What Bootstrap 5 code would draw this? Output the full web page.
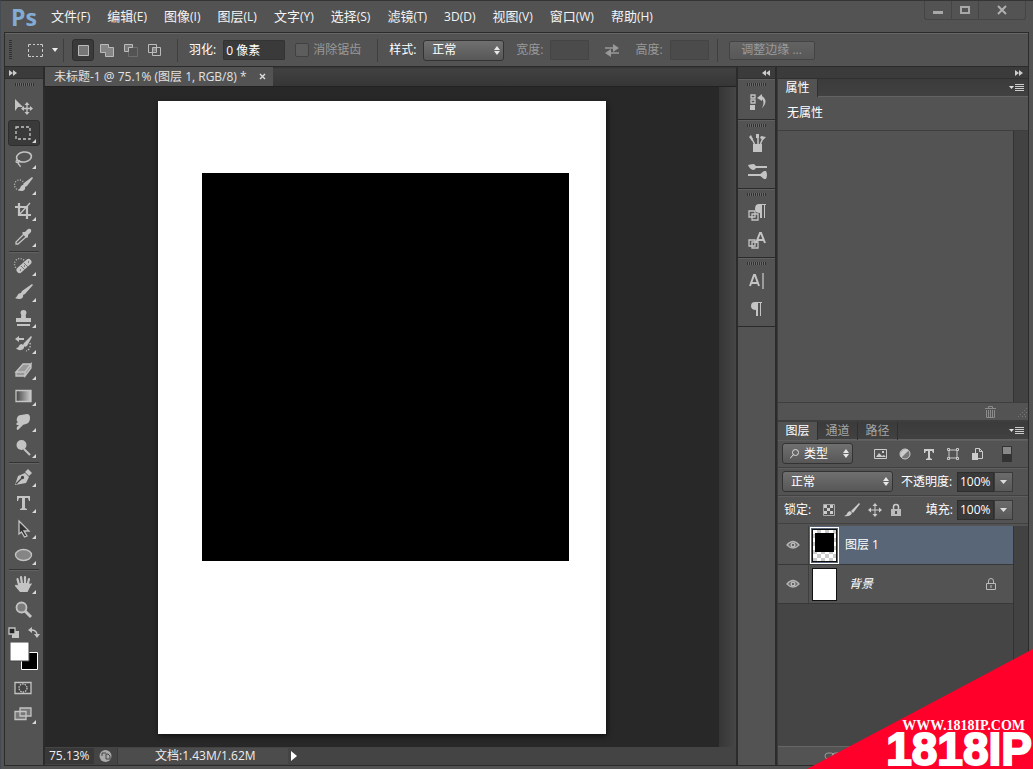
<!DOCTYPE html>
<html lang="zh-CN">
<head>
<meta charset="utf-8">
<meta name="viewport" content="width=device-width, initial-scale=1">
<title>未标题-1 @ 75.1%</title>
<link href="https://cdn.jsdelivr.net/npm/bootstrap@5.3.0/dist/css/bootstrap.min.css" rel="stylesheet">
<style>
:root{--face:#535353;--line:#2b2b2b;--hi:#666;--ico:#c4c4c4}
body{background:var(--face);color:#fff;font:12px/16px "Open Sans","Noto Sans CJK SC",sans-serif;border-top:1px solid #353535;border-left:1px solid #454b53;overflow:hidden}
button{background:none;border:0;padding:0;color:inherit;line-height:inherit}
svg{display:block;flex:none}
.ico{fill:none;stroke:var(--ico);stroke-width:1.3}
.ico .f{fill:var(--ico);stroke:none}
.menus{height:31px;padding-left:10px}
.logo-ps{color:#84abd3;font:bold 23px/28px "Open Sans",sans-serif;width:40px}
.menus a{color:#f4f4f4;text-decoration:none;font-size:13px;white-space:nowrap}
.menus a span{font-size:12px}
.menus .list-unstyled{gap:17px}
.win{margin-right:7px;border:1px solid #454545;border-top:0;height:19px;border-radius:0 0 3px 3px}
.win button{width:27px;border-right:1px solid #454545;display:grid;place-items:center}
.win button:last-child{width:46px;border:0}
.frame{margin:0 4px 3px 3px;border:1px solid var(--line)}
.opts{height:34px;border-top:1px solid var(--hi);border-bottom:1px solid var(--line);white-space:nowrap}
.dim{color:#9a9a9a}
.grip-v{width:3px;height:20px;background:repeating-linear-gradient(#303030 0 1px,#535353 1px 2px)}
.grip-h{width:19px;height:3px;background:repeating-linear-gradient(90deg,#303030 0 1px,#6a6a6a 1px 2px)}
.vsep{width:1px;height:23px;background:#3e3e3e;margin:0 11px}
.modes{gap:2px}
.mode{width:22px;height:22px;display:grid;place-items:center;border:1px solid transparent;border-radius:2px}
.mode.on,.tool.on{background:#3a3a3a;border:1px solid #2e2e2e;border-radius:3px}
.opts .field{background:#3a3a3a;border:1px solid #333;color:#fff;height:20px;padding:0 2px;font-size:12px;border-radius:1px}
.opts .field:disabled{background:#4b4b4b;border-color:#444}
.opts .lab{margin-right:7px}
.tick{appearance:none;width:14px;height:14px;margin:0 4px 0 10px;background:#5d5d5d;border:1px solid #414141;border-radius:2px}
.pick{appearance:none;height:21px;border:1px solid #333;border-radius:3px;color:#fff;padding:0 8px;font-size:12px;line-height:16px;background:url("data:image/svg+xml,%3Csvg xmlns='http://www.w3.org/2000/svg' width='6' height='9'%3E%3Cpath d='M0 4L3 0L6 4M0 5L3 9L6 5' fill='%23e8e8e8'/%3E%3C/svg%3E") no-repeat right 3px center,linear-gradient(#707070,#575757)}
.soft{height:19px;border:1px solid #434343;border-radius:2px;background:linear-gradient(#626262,#585858)}
.cap-bar{height:12px;background:#3b3b3b;border-bottom:1px solid #303030}
.tools{width:39px;border-right:1px solid var(--line)}
.tool{height:26px;width:32px;position:relative;display:grid;place-items:center;border:1px solid transparent;padding-right:2px}
.tool.sub::after{content:"";position:absolute;right:3px;bottom:2px;border:2px solid;border-color:transparent #d8d8d8 #d8d8d8 transparent}
.tsep{width:30px;height:1px;margin:1px 0;background:#343434;box-shadow:0 1px #626262}
.doc{border-left:1px solid var(--line);border-right:2px solid var(--line)}
.tabs-doc{height:20px;background:linear-gradient(#333,#414141 2px,#363636);border-bottom:1px solid #222}
.tabs-doc .cur{background:var(--face);color:#e2e2e2;padding:0 7px 0 9px;height:19px}
.tabs-doc .cur button{margin-left:12px}
.stage{background:#282828}
.paper{width:448px;height:633px;background:#fff;padding:72px 37px 0 44px;box-shadow:1px 2px 5px #111}
.paper div{height:388px;background:#000}
.scroller{width:17px;background:linear-gradient(90deg,#363636,#464646)}
.status{height:18px;background:#444;color:#eee;font-size:12px}
.status .z{width:49px;padding-left:4px;background:#383838}
.status .info{width:171px;background:#4c4c4c;border-left:1px solid #3a3a3a;padding-left:37px}
.strip{width:39px;border-right:2px solid var(--line)}
.strip section{border-bottom:1px solid var(--line);border-top:1px solid #606060;padding:3px 0}
.strip .grip-h{margin:0 auto 2px}
.strip button{height:28px;width:37px;display:grid;place-items:center}
.dock{width:251px;border-left:1px solid #3c3c3c}
.tabbar{height:18px;background:linear-gradient(#3b3b3b,#414141);border-bottom:1px solid #636363}
.tabbar button{width:40px;height:18px;font-size:12px;border-right:1px solid #303030;color:#a5a5a5}
.tabbar .on{background:var(--face);color:#fff}
.track{width:15px;background:#424242;border-left:1px solid #333}
.row-c{border-bottom:1px solid #414141;height:28px;box-shadow:inset 0 1px #5e5e5e}
.kinds{gap:10px;margin-left:21px}
.num{width:37px;height:20px;background:#393939;border:1px solid #2e2e2e;color:#fff;padding:0 2px;font-size:12px}
.drop{width:19px;height:20px;border:1px solid #3a3a3a;background:linear-gradient(#6b6b6b,#595959);display:grid;place-items:center}
.layers{height:222px;border-top:2px solid var(--face)}
.layer{height:39px;background:var(--face);border-bottom:1px solid #383838}
.layer.sel .name-c{background:#586678}
.layer .eye{width:31px;align-self:stretch;display:grid;place-items:center;border-right:1px solid #3f3f3f}
.thumb{width:25px;height:33px;border:1px solid #111;background:#fff}
.thumb.chk{background:repeating-conic-gradient(#ccc 0 25%,#fff 0 50%) 0 0/8px 8px;padding:3px 2px;outline:1px solid #fff;outline-offset:1px}
.thumb.chk div{height:19px;background:#000}
.empty{background:#454545}
.brand-mark{position:absolute;right:0;bottom:0;width:226px;height:120px;background:#ff002b;clip-path:polygon(100% 0,100% 100%,0 100%);text-align:right}
.brand-mark p{margin:0;white-space:nowrap}
.brand-mark .u{font:bold 14px/16px "Liberation Serif",serif;padding:69px 8px 0 0}
.brand-mark .n{font:bold 46px/30px "Liberation Sans",sans-serif;padding-right:1px;-webkit-text-stroke:2px #fff;stroke-linejoin:round}
</style>
<script src="https://cdn.jsdelivr.net/npm/bootstrap@5.3.0/dist/js/bootstrap.bundle.min.js"></script>
</head>
<body class="vh-100 d-flex flex-column position-relative">
<header class="menus d-flex align-items-center flex-shrink-0">
  <div class="logo-ps">Ps</div>
  <nav class="flex-grow-1"><ul class="list-unstyled d-flex m-0">
    <li><a href="#">文件<span>(F)</span></a></li><li><a href="#">编辑<span>(E)</span></a></li><li><a href="#">图像<span>(I)</span></a></li><li><a href="#">图层<span>(L)</span></a></li><li><a href="#">文字<span>(Y)</span></a></li><li><a href="#">选择<span>(S)</span></a></li><li><a href="#">滤镜<span>(T)</span></a></li><li><a href="#"><span>3D(D)</span></a></li><li><a href="#">视图<span>(V)</span></a></li><li><a href="#">窗口<span>(W)</span></a></li><li><a href="#">帮助<span>(H)</span></a></li>
  </ul></nav>
  <div class="win d-flex align-self-start">
    <button aria-label="最小化"><svg width="10" height="10"><path d="M0 6h10v3H0z" fill="#a8a8a8"/></svg></button>
    <button aria-label="最大化"><svg width="10" height="8"><path d="M1 1h8v6H1z" fill="none" stroke="#a8a8a8" stroke-width="2"/></svg></button>
    <button aria-label="关闭"><svg width="10" height="10"><path d="M1 1l8 8M9 1L1 9" stroke="#b0b0b0" stroke-width="2"/></svg></button>
  </div>
</header>
<div class="frame flex-grow-1 d-flex flex-column overflow-hidden">
<div class="opts d-flex align-items-center flex-shrink-0">
  <div class="grip-v ms-1"></div>
  <svg class="ms-3" width="15" height="13"><path d="M.5 3V.5H3M5 .5h2M9 .5h2M12 .5h2.500V3M14.500 5v3M14.500 10v2.500H12M10 12.500H8M6 12.500H4M3 12.500H.5V10M.5 8V5" fill="none" stroke="#ccc"/></svg>
  <svg class="ms-2" width="8" height="4"><path d="M1 0h6L4 4z" fill="#eee"/></svg>
  <div class="vsep ms-1 me-2"></div>
  <div class="modes d-flex">
  <button class="mode on" aria-label="新选区"><svg width="11" height="11"><path d="M.5.5h10v10H.5z" fill="#777" stroke="#bbb"/></svg></button>
  <button class="mode" aria-label="添加"><svg width="14" height="13"><path d="M.5.5h8v3h5v9h-8v-4h-5z" fill="#858585" stroke="#bbb"/></svg></button>
  <button class="mode" aria-label="减去"><svg width="14" height="13"><path d="M4.500 3.500h9v9h-9z" fill="none" stroke="#6e6e6e"/><path d="M.5.500h8v3h-4v4h-4z" fill="#777" stroke="#bbb"/></svg></button>
  <button class="mode" aria-label="交叉"><svg width="14" height="13"><path d="M4.500 3.500h4v4h-4z" fill="#888"/><path d="M.5.500h8v8h-8zM4.500 3.500h8v8h-8z" fill="none" stroke="#bbb"/></svg></button>
  </div>
  <div class="vsep"></div>
  <label for="feather" class="lab">羽化:</label><input id="feather" class="field" style="width:62px" value="0 像素">
  <input type="checkbox" class="tick" id="aa" disabled><label for="aa" class="dim">消除锯齿</label>
  <div class="vsep ms-3"></div>
  <label for="style" class="lab">样式:</label><select id="style" class="pick" style="width:81px"><option>正常</option></select>
  <label for="w" class="lab dim ms-2 ps-1">宽度:</label><input id="w" class="field" style="width:39px" disabled>
  <button class="ms-3 me-3" aria-label="互换"><svg width="14" height="13"><path d="M0 4h8M5 9h9" stroke="#999" stroke-width="1.500"/><path d="M8 0l6 4-6 4zM6 5L0 9l6 4z" fill="#999"/></svg></button>
  <label for="h" class="lab dim">高度:</label><input id="h" class="field" style="width:39px" disabled>
  <div class="vsep ms-2"></div>
  <button class="soft dim" style="width:86px">调整边缘 ...</button>
</div>
<div class="d-flex flex-grow-1 overflow-hidden">
  <aside class="tools flex-shrink-0">
    <div class="cap-bar"><svg class="ms-1" width="9" height="10"><path d="M0 3l4 3-4 3zM4 3l4 3-4 3z" fill="#ccc"/></svg></div>
    <div class="d-flex flex-column align-items-center">
      <div class="grip-h mt-1 mb-2"></div>
      <button class="tool" aria-label="移动"><svg class="ico" width="20" height="20"><path class="f" d="M2 2v12l3-4 5 0z"/><path d="M14 7v9M9.500 11.500h9"/><path class="f" d="M14 5l2.500 3h-5zM14 18l2.500-3h-5zM8 11.500l3-2.500v5zM20 11.500l-3-2.500v5z"/></svg></button>
      <button class="tool sub on" aria-label="选框"><svg class="ico" width="20" height="20"><path stroke-dasharray="3 2" d="M3 4h14v12H3z"/></svg></button>
      <button class="tool sub" aria-label="套索"><svg class="ico" width="20" height="20"><ellipse cx="11" cy="8" rx="7.500" ry="5" transform="rotate(-8 11 8)" stroke-width="1.600"/><path d="M5 11c-4 1-1 4 1 2s-2-2-1 1 3 2 2 4"/></svg></button>
      <button class="tool sub" aria-label="快速选择"><svg class="ico" width="20" height="20"><circle cx="6.500" cy="10" r="5" stroke-dasharray="1 1.600"/><path class="f" d="M20 3l-1-1-8 6-1 2 2 2 2-1zM10 10c-3 0-2 4-5 5 3 2 8 1 7-3z"/></svg></button>
      <button class="tool sub" aria-label="裁剪"><svg class="ico" width="20" height="20"><path stroke-width="2.200" d="M6 2v12h12M2 6h12v12"/><path d="M6 14L17 2"/></svg></button>
      <button class="tool sub" aria-label="吸管"><svg class="ico" width="20" height="20"><path d="M11 7l2 3-8 7-2 0 0-2z"/><path class="f" d="M10 5l2 0 3-3q4-1 3 3l-3 3v2l-1 1-5-5z"/></svg></button>
      <div class="tsep"></div>
      <button class="tool sub" aria-label="修复画笔"><svg class="ico" width="20" height="20"><circle cx="7" cy="8" r="5.500" stroke-dasharray="1 1.600"/><rect class="f" x="2" y="7" width="18" height="6" rx="3" transform="rotate(-42 11 10)"/><path d="M8 10l4 4M11 7l4 4" stroke="#777" stroke-width="1"/><path d="M11 10h1M7 14h1M15 6h1" stroke="#666"/></svg></button>
      <button class="tool sub" aria-label="画笔"><svg class="ico" width="20" height="20"><path class="f" d="M19 2l1 1-8 9-2 1-2-2 1-2zM8 11c-4 0-3 4-6 5 4 2 9 1 8-3z"/></svg></button>
      <button class="tool sub" aria-label="图章"><svg class="ico" width="20" height="20"><path class="f" d="M8 10q1-3-.5-5 0-3 3-3t3 3q-1.500 2-.5 5h5v4H3v-4zM4 16h13v2H4z"/></svg></button>
      <button class="tool sub" aria-label="历史画笔"><svg class="ico" width="20" height="20"><path class="f" d="M19 3l-1-1-7 7-1 2 2 2 2-1zM9 10c-4 0-2 4-6 4 3 4 9 2 8-2zM2 5l4-3v2h5v2H6v2z"/><path d="M17 9c1 4-1 7-4 8" stroke-dasharray="1.500 1.500"/></svg></button>
      <button class="tool sub" aria-label="橡皮擦"><svg class="ico" width="20" height="20"><path fill="#999" d="M3 12l7-8h8l-6 8zM3 12h9v4H3zM12 16l6-8V4l-6 8z"/></svg></button>
      <button class="tool sub" aria-label="渐变"><svg class="ico" width="20" height="20"><defs><linearGradient id="g"><stop stop-color="#444"/><stop offset="1" stop-color="#ccc"/></linearGradient></defs><path fill="url(#g)" d="M3 4.500h15v11H3z"/></svg></button>
      <button class="tool sub" aria-label="涂抹"><svg class="ico" width="20" height="20"><path class="f" d="M4 6q1-3 4-3l6-1q3 0 3 4 0 5-4 6-3 0-5 3l-3 3q-2 0-1-3l2-2H4q-2-1 1-3Q3 9 4 6z"/></svg></button>
      <button class="tool sub" aria-label="减淡"><svg class="ico" width="20" height="20"><circle class="f" cx="8.500" cy="7" r="5"/><path stroke-width="2" d="M11 11l6 6"/></svg></button>
      <div class="tsep"></div>
      <button class="tool sub" aria-label="钢笔"><svg class="ico" width="20" height="20"><path class="f" d="M2 18l3-9 7-3 4 4-3 6z"/><path class="f" d="M12 5l3-3 4 4-3 3z"/><path stroke="#444" d="M3 17l6-6"/><circle cx="9.500" cy="10.500" r="1" fill="#444" stroke="#444"/></svg></button>
      <button class="tool sub" aria-label="文字"><svg class="ico" width="20" height="20"><path class="f" d="M4 3h13v5h-1l-1-3h-3v10l2 1v1H7v-1l2-1V5H6L5 8H4z"/></svg></button>
      <button class="tool sub" aria-label="路径选择"><svg class="ico" width="20" height="20"><path fill="#333" d="M6 2l10 10-5 0 3 5-2.500 1-3-5L6 15z"/></svg></button>
      <button class="tool sub" aria-label="椭圆"><svg class="ico" width="20" height="20"><ellipse cx="10.500" cy="10" rx="8" ry="5.500" fill="#858585"/></svg></button>
      <div class="tsep"></div>
      <button class="tool sub" aria-label="抓手"><svg class="ico" width="20" height="20"><path d="M6 11L4.500 5M9 10L8 3M12 10V3M14.500 11L16 5" stroke-width="2.200" stroke-linecap="round"/><path class="f" d="M5 9h11l1 1 1.500-1q1 1-1 3l-3 6H7l-5-6q0-2 2-1l2 1z"/></svg></button>
      <button class="tool" aria-label="缩放"><svg class="ico" width="20" height="20"><circle cx="8.500" cy="7.500" r="5" fill="#7b7b7b" stroke-width="1.800"/><path stroke-width="3" d="M12 11l6 6"/></svg></button>
      <div class="d-flex gap-2 mt-1 mb-1"><svg class="ico" width="12" height="11"><path class="f" d="M4 4h7v7H4z"/><path fill="#222" d="M1 1h6v6H1z"/></svg><svg class="ico" width="12" height="11"><path d="M3 3q6 0 6 5"/><path class="f" d="M4 0v6L0 3zM6 7h6l-3 4z"/></svg></div>
      <svg class="mb-1" width="29" height="29" role="img" aria-label="前景色和背景色"><path d="M11.500 10.500h16v17h-16z" fill="#000" stroke="#fff"/><path d="M0 0h19v19H0z" fill="#fff" stroke="#444"/></svg>
      <button class="tool" aria-label="快速蒙版"><svg class="ico" width="20" height="20"><path fill="#444" d="M2 4.500h16v11H2z"/><circle cx="10" cy="10" r="4" stroke-dasharray="1.500 1"/></svg></button>
      <button class="tool sub" aria-label="屏幕模式"><svg class="ico" width="20" height="20"><path fill="#777" d="M2 7.500h11v8H2zM7 4h11v8H7z"/></svg></button>
    </div>
  </aside>
  <main class="doc flex-grow-1 d-flex flex-column">
    <div class="tabs-doc flex-shrink-0"><div class="cur d-inline-flex align-items-center">未标题-1 @ 75.1% (图层 1, RGB/8) *<button aria-label="关闭文档"><svg width="7" height="7"><path d="M1 1l5 5M6 1L1 6" stroke="#ddd" stroke-width="1.400"/></svg></button></div></div>
    <div class="flex-grow-1 d-flex overflow-hidden">
      <div class="stage flex-grow-1 d-flex justify-content-center align-items-center"><div class="paper"><div></div></div></div>
      <div class="scroller"></div>
    </div>
    <div class="status d-flex align-items-center flex-shrink-0"><span class="z">75.13%</span>
      <svg class="mx-1" width="15" height="14"><circle cx="7.500" cy="7" r="6" fill="#aaa"/><path d="M4 7V4h4M8 10V5h2l2 2v3z" fill="none" stroke="#444"/></svg>
      <span class="info">文档:1.43M/1.62M</span><button aria-label="更多"><svg width="12" height="12"><path d="M3 1l6 5-6 5z" fill="#fff"/></svg></button></div>
  </main>
  <aside class="strip flex-shrink-0">
    <div class="cap-bar d-flex justify-content-end pe-1"><svg width="9" height="10"><path d="M4 3L0 6l4 3zM8 3L4 6l4 3z" fill="#ccc"/></svg></div>
    <section><div class="grip-h"></div><button aria-label="历史记录"><svg class="ico" width="20" height="20"><path d="M4 3h4v3H4zM4 8h4v3H4z"/><path class="f" d="M3 13h5v5H3zM10 6l5-4v2q7 5 0 12 3-6 0-9v2z"/></svg></button></section>
    <section><div class="grip-h"></div><button aria-label="画笔预设"><svg class="ico" width="20" height="20"><path d="M8 12L5 6M11 12V3M13 12l3-7" stroke-width="1.500"/><path class="f" d="M6 11h9v8H6zM2 4l2-2 2 4-1 2zM9 1h3l0 4H9zM14 3l5 1-3 3-3-2z"/></svg></button><button aria-label="画笔"><svg class="ico" width="20" height="20"><path d="M9 6h11M1 14h13" stroke-width="2"/><path class="f" d="M1 4q4-1 6-1l3 3-3 3Q3 9 1 4zM12 14l5-4 2 0q2 4 0 8h-2z"/></svg></button></section>
    <section><div class="grip-h"></div><button aria-label="段落样式"><svg class="ico" width="20" height="20"><path d="M2 9h6v6H2zM5 12h6v6H5z"/><path class="f" d="M8 7q0-5 4-5h7v1h-1v13h-1V3h-2v13h-2V11Q8 11 8 7z"/></svg></button><button aria-label="字符样式"><svg class="ico" width="20" height="20"><path d="M2 10h6v6H2zM5 12h6v6H5z"/><path d="M9 13l4-10h1l4 10M10 10h7" stroke-width="2"/></svg></button></section>
    <section><div class="grip-h"></div><button aria-label="字符"><svg class="ico" width="20" height="20"><path d="M3 15l4-11h1l4 11M4 12h7" stroke-width="2"/><path d="M16 2v16"/></svg></button><button aria-label="段落"><svg class="ico" width="20" height="20"><path class="f" d="M4 7q0-4 4-4h7v1h-1v13h-1V4h-2v13H9V11Q4 11 4 7z"/></svg></button></section>
  </aside>
  <aside class="dock flex-shrink-0 d-flex flex-column">
    <div class="cap-bar d-flex justify-content-end pe-1 flex-shrink-0"><svg width="9" height="10"><path d="M0 3l4 3-4 3zM4 3l4 3-4 3z" fill="#ccc"/></svg></div>
    <div class="tabbar d-flex align-items-center flex-shrink-0"><button class="on">属性</button><svg class="ms-auto me-1" width="15" height="10"><path d="M0 3h5L2.500 6z" fill="#ddd"/><path d="M6 1.500h9M6 3.500h9M6 5.500h9M6 7.500h9" stroke="#ccc"/></svg></div>
    <div class="flex-shrink-0" style="padding:8px 9px 9px;border-bottom:1px solid #3e3e3e">无属性</div>
    <div class="d-flex flex-grow-1"><div class="flex-grow-1"></div><div class="track"></div></div>
    <div class="d-flex align-items-center justify-content-end border-top flex-shrink-0" style="height:20px;border-color:#3e3e3e!important;border-bottom:2px solid #303030"><button class="me-3 pe-1" aria-label="删除"><svg width="11" height="12" fill="none" stroke="#8b8b8b"><path d="M0 2.500h11M3.500 2V.500h4V2M1.500 4v7.500h8V4M3.500 4v7M5.500 4v7M7.500 4v7"/></svg></button><svg width="12" height="12"><path d="M2 11L11 2M6 11l5-5M9 11l2-2" stroke="#888" stroke-dasharray="1 2"/></svg></div>
    <div class="tabbar d-flex align-items-center flex-shrink-0"><button class="on">图层</button><button>通道</button><button>路径</button><svg class="ms-auto me-1" width="15" height="10"><path d="M0 3h5L2.500 6z" fill="#ddd"/><path d="M6 1.500h9M6 3.500h9M6 5.500h9M6 7.500h9" stroke="#ccc"/></svg></div>
    <div class="row-c d-flex align-items-center flex-shrink-0 ps-1">
      <div class="position-relative"><select class="pick" aria-label="类型" style="width:71px;padding-left:21px"><option>类型</option></select><svg class="position-absolute top-50 translate-middle-y start-0 ms-2" width="9" height="10" fill="none" stroke="#ddd"><circle cx="5.500" cy="3.500" r="3"/><path d="M3.500 5.500L0 9.500"/></svg></div>
      <div class="kinds d-flex align-items-center"><svg width="14" height="14"><path d="M.5 2.500h12v9H.5z" fill="none" stroke="#ccc"/><path d="M2 10l3-4 3 3 2-1 2 2zM8 4h2v2H8z" fill="#ccc"/></svg><svg width="14" height="14"><circle cx="7" cy="7" r="5" fill="#777" stroke="#ccc"/><path d="M10.500 3.500a5 5 0 0 0-7 7z" fill="#ccc"/></svg><svg width="14" height="14"><path d="M2 2h10v4h-1l-1-2H8v7l2 1v1H4v-1l2-1V4H4L3 6H2z" fill="#ccc"/></svg><svg width="14" height="14" fill="none" stroke="#ccc"><path d="M3 3h8v8H3zM1.500 1.500h2v2h-2zM10.500 1.500h2v2h-2zM1.500 10.500h2v2h-2zM10.500 10.500h2v2h-2z"/></svg><svg width="14" height="14"><path d="M5.500 6V1.500h4l3 3v7H8M9.500 1.500v3h3" fill="none" stroke="#ccc"/><path d="M2 6h6v7H2z" fill="#ccc"/></svg></div>
      <svg class="ms-auto me-3" width="10" height="18"><path d="M0 1h10v16H0z" fill="#333"/><path d="M1 2h8v7H1z" fill="#888"/></svg>
    </div>
    <div class="row-c d-flex align-items-center flex-shrink-0 ps-1"><select class="pick" aria-label="混合模式" style="width:111px"><option>正常</option></select><label for="op" class="ms-2 me-auto">不透明度:</label><input id="op" class="num" value="100%"><button class="drop" style="margin-right:15px" aria-label="不透明度滑块"><svg width="7" height="4"><path d="M0 0h7L3.500 4z" fill="#ddd"/></svg></button></div>
    <div class="row-c d-flex align-items-center flex-shrink-0" style="padding-left:6px">锁定:
      <div class="d-flex gap-2 ms-2 ps-1"><svg width="13" height="14"><path d="M.5 1.500h11v11H.5z" fill="none" stroke="#aaa"/><path d="M1 2h3v3H1zM7 2h3v3H7zM4 5h3v3H4zM1 8h3v3H1zM7 8h3v3H7z" fill="#ccc"/></svg><svg width="16" height="14"><path d="M15 0l1 1-7 9-2-2zM6 8l2 2q-2 4-8 3 3-1 4-4z" fill="#ccc"/></svg><svg width="14" height="14"><path d="M7 2v10M2 7h10" stroke="#ccc"/><path d="M7 0l2.500 3h-5zM7 14l2.500-3h-5zM0 7l3-2.500v5zM14 7l-3-2.500v5z" fill="#ccc"/></svg><svg width="12" height="14"><path d="M3.500 6V4q0-2.500 2.500-2.500T8.500 4v2" fill="none" stroke="#ccc" stroke-width="1.500"/><path d="M1 6h10v7H1zM5 8v3h2V8z" fill="#bbb" fill-rule="evenodd"/></svg></div>
      <label for="fl" class="ms-auto me-1">填充:</label><input id="fl" class="num" value="100%"><button class="drop" style="margin-right:15px" aria-label="填充滑块"><svg width="7" height="4"><path d="M0 0h7L3.500 4z" fill="#ddd"/></svg></button></div>
    <div class="layers d-flex flex-shrink-0">
      <div class="flex-grow-1 empty">
        <div class="layer sel d-flex align-items-center"><button class="eye" aria-label="显示"><svg width="14" height="10"><path d="M1 5q6-7 12 0-6 6-12 0z" fill="#666" stroke="#b5b5b5" stroke-width="1.300"/><circle cx="7" cy="5" r="2.500" fill="#bbb"/><circle cx="7" cy="5" r="1" fill="#444"/></svg></button><div class="name-c flex-grow-1 h-100 d-flex align-items-center" style="padding-left:3px"><div class="thumb chk"><div></div></div><span class="ms-2">图层 1</span></div></div>
        <div class="layer d-flex align-items-center"><button class="eye" aria-label="显示"><svg width="14" height="10"><path d="M1 5q6-7 12 0-6 6-12 0z" fill="#666" stroke="#b5b5b5" stroke-width="1.300"/><circle cx="7" cy="5" r="2.500" fill="#bbb"/><circle cx="7" cy="5" r="1" fill="#444"/></svg></button><div class="thumb" style="margin-left:3px"></div><em class="ms-2 ps-1">背景</em><svg class="ms-auto me-3" width="12" height="14"><path d="M3.500 6V4q0-2.500 2.500-2.500T8.500 4v2M1.500 6.500h9v6h-9zM6 8v3" fill="none" stroke="#bbb"/></svg></div>
      </div><div class="track"></div>
    </div>
    <div class="flex-shrink-0" style="height:19px;border-top:1px solid #666;padding:4px 0 0 46px"><svg width="18" height="12" fill="none" stroke="#999"><rect x="1" y="2" width="9" height="6" rx="3"/><rect x="8" y="2" width="9" height="6" rx="3"/></svg></div>
  </aside>
</div>
</div>
<div class="brand-mark"><p class="u">WWW.1818IP.COM</p><p class="n">1818IP</p></div>
</body>
</html>
